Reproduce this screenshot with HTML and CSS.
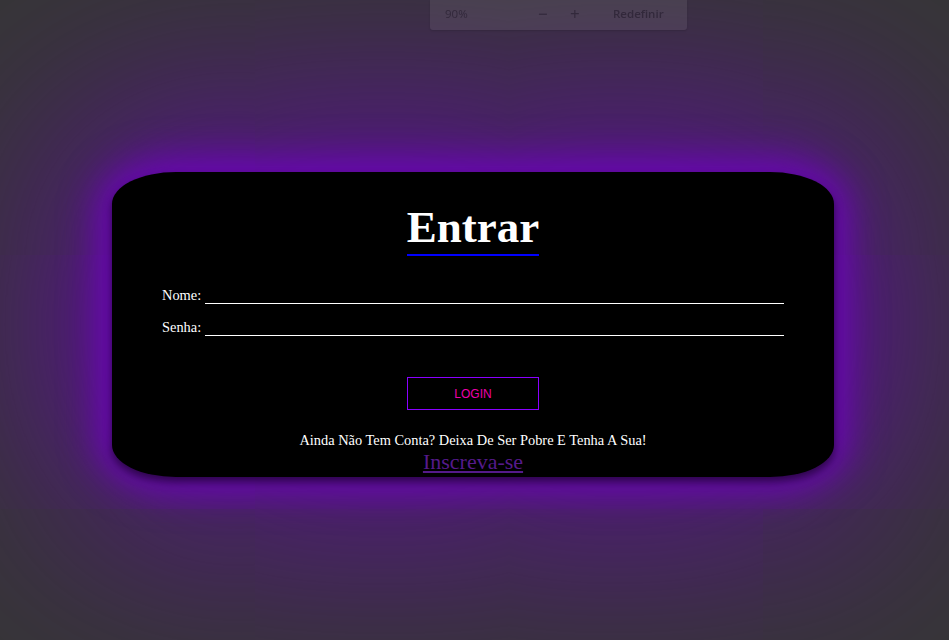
FILE: index.html
```html
<!DOCTYPE html>
<html lang="pt-BR">
<head>
<meta charset="utf-8">
<title>Entrar</title>
<link rel="stylesheet" href="styles.css">
</head>
<body>
<div class="zoom-popup">
  <span class="zoom-value">90%</span>
  <span class="zoom-btn">−</span>
  <span class="zoom-btn">+</span>
  <span class="zoom-reset">Redefinir</span>
</div>
<main class="card">
  <h1 class="title">Entrar</h1>
  <form class="form">
    <div class="row">
      <label class="label" for="nome">Nome:</label>
      <input class="field" id="nome" type="text">
    </div>
    <div class="row">
      <label class="label" for="senha">Senha:</label>
      <input class="field" id="senha" type="password">
    </div>
    <button class="login" type="button">LOGIN</button>
  </form>
  <p class="hint">Ainda Não Tem Conta? Deixa De Ser Pobre E Tenha A Sua!</p>
  <a class="signup" href="#">Inscreva-se</a>
</main>
</body>
</html>
```
FILE: styles.css
```css
html, body {
  margin: 0;
  height: 100%;
}
body {
  background: #363636;
  font-family: "Liberation Serif", "Times New Roman", serif;
  display: flex;
  align-items: center;
  justify-content: center;
  padding: 9px 3px 0 0;
  box-sizing: border-box;
  overflow: hidden;
}
.card {
  width: 722px;
  height: 305px;
  box-sizing: border-box;
  background: #000;
  border-radius: 64px / 32px;
  padding: 29px 50px 0;
  display: flex;
  flex-direction: column;
  align-items: center;
  color: #fff;
  box-shadow:
    0 5px 8px rgba(0, 0, 0, 0.55),
    0 0 36px 14px #6a06b4,
    0 0 220px 40px #6404ae;
}
.title {
  margin: 0;
  font-size: 45px;
  line-height: 53px;
  font-weight: 700;
  border-bottom: 2px solid #0000ff;
}
.form {
  margin-top: 30px;
  width: 100%;
  display: flex;
  flex-direction: column;
  align-items: center;
}
.row {
  width: 100%;
  display: flex;
  align-items: flex-start;
  gap: 4px;
  margin-bottom: 14px;
}
.label {
  font-size: 14.4px;
  line-height: 18px;
  color: #fff;
}
.field {
  flex: 1;
  height: 18px;
  box-sizing: border-box;
  margin: 0;
  padding: 0;
  background: transparent;
  border: none;
  border-bottom: 1px solid #fff;
  color: #fff;
  outline: none;
}
.login {
  margin-top: 27px;
  width: 132px;
  height: 33px;
  background: #000;
  border: 1px solid #8a00ff;
  color: #ee00aa;
  font-family: "Liberation Sans", Arial, sans-serif;
  font-size: 12px;
  padding: 0;
}
.hint {
  margin: 22px 0 0;
  font-size: 14.4px;
  line-height: 17px;
}
.signup {
  font-size: 22px;
  line-height: 25px;
  color: #551a8b;
}
.zoom-popup {
  position: absolute;
  top: 0;
  left: 430px;
  width: 257px;
  height: 30px;
  box-sizing: border-box;
  background: rgba(255, 255, 255, 0.08);
  border-radius: 0 0 3px 3px;
  box-shadow: 0 1px 2px rgba(0, 0, 0, 0.15);
  display: flex;
  align-items: center;
  padding: 0 0 4px 15px;
  font-family: "Open Sans", "Liberation Sans", sans-serif;
  font-size: 11.5px;
  color: rgba(40, 32, 48, 0.7);
  filter: blur(0.4px);
}
.zoom-value {
  width: 93px;
}
.zoom-btn {
  font-size: 17px;
  width: 32px;
}
.zoom-reset {
  margin-left: 11px;
  font-weight: 600;
}
```
